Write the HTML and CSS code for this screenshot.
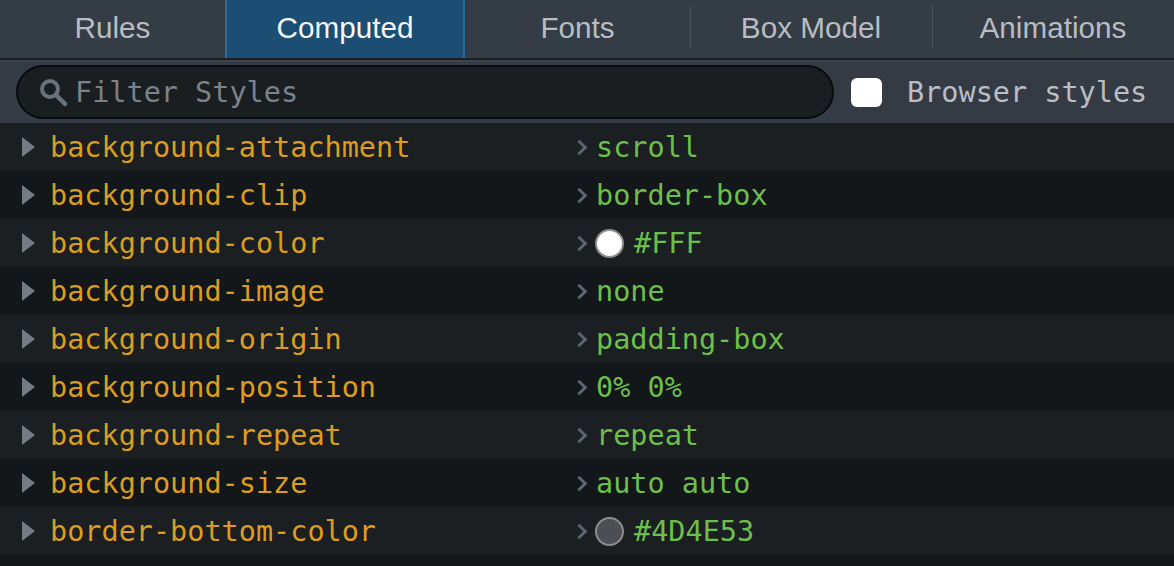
FILE: index.html
```html
<!DOCTYPE html>
<html>
<head>
<meta charset="utf-8">
<link rel="stylesheet" href="styles.css">
</head>
<body>
<div class="panel">
  <div class="tabs">
    <div class="tab t1">Rules</div>
    <div class="tab t2 active">Computed</div>
    <div class="tab t3">Fonts</div>
    <div class="tab t4 sep">Box Model</div>
    <div class="tab t5 sep">Animations</div>
  </div>
  <div class="toolbar">
    <div class="search">
      <svg class="search-icon" width="30" height="30" viewBox="0 0 30 30"><circle cx="11" cy="11" r="8" fill="none" stroke="#6c7279" stroke-width="4"/><line x1="17" y1="17" x2="26" y2="26" stroke="#6c7279" stroke-width="4.5" stroke-linecap="round"/></svg>
      <span class="placeholder">Filter Styles</span>
    </div>
    <label class="browser">
      <span class="checkbox"></span>
      <span class="browser-label">Browser styles</span>
    </label>
  </div>
  <div class="rows">
    <div class="row"><span class="twisty"></span><span class="name">background-attachment</span><span class="chev"></span><span class="value">scroll</span></div>
    <div class="row"><span class="twisty"></span><span class="name">background-clip</span><span class="chev"></span><span class="value">border-box</span></div>
    <div class="row"><span class="twisty"></span><span class="name">background-color</span><span class="chev"></span><span class="swatch white"></span><span class="value">#FFF</span></div>
    <div class="row"><span class="twisty"></span><span class="name">background-image</span><span class="chev"></span><span class="value">none</span></div>
    <div class="row"><span class="twisty"></span><span class="name">background-origin</span><span class="chev"></span><span class="value">padding-box</span></div>
    <div class="row"><span class="twisty"></span><span class="name">background-position</span><span class="chev"></span><span class="value">0% 0%</span></div>
    <div class="row"><span class="twisty"></span><span class="name">background-repeat</span><span class="chev"></span><span class="value">repeat</span></div>
    <div class="row"><span class="twisty"></span><span class="name">background-size</span><span class="chev"></span><span class="value">auto auto</span></div>
    <div class="row"><span class="twisty"></span><span class="name">border-bottom-color</span><span class="chev"></span><span class="swatch gray"></span><span class="value">#4D4E53</span></div>
  </div>
</div>
</body>
</html>
```

FILE: styles.css
```css
html, body {
  margin: 0;
  padding: 0;
  background: #14171a;
  overflow: hidden;
}
.panel {
  width: 1174px;
  height: 566px;
  overflow: hidden;
  background: #14171a;
}
.tabs {
  display: flex;
  height: 58px;
  background: #343c45;
  border-bottom: 2px solid #1b1e21;
}
.tab {
  font-family: "Liberation Sans", Arial, sans-serif;
  font-size: 29.7px;
  color: #b9bdc2;
  text-align: center;
  line-height: 55px;
  height: 58px;
  box-sizing: border-box;
  position: relative;
}
.t1 { width: 225px; }
.t2 { width: 240px; }
.t3 { width: 225px; }
.t4 { width: 242px; }
.t5 { width: 242px; }
.tab.active {
  background: #1c4e74;
  color: #f5f7fa;
  border-left: 2px solid #2f6a94;
  border-right: 2px solid #2f6a94;
}
.tab.sep::before {
  content: "";
  position: absolute;
  left: 0;
  top: 6px;
  height: 42px;
  width: 1px;
  background: #4d545d;
}
.toolbar {
  display: flex;
  align-items: center;
  height: 63px;
  box-sizing: border-box;
  padding: 4px 0 5px 16px;
  background: #343b44;
  border-top: 2px solid #3c434c;
}
.search {
  display: flex;
  align-items: center;
  width: 818px;
  height: 54px;
  box-sizing: border-box;
  border: 2px solid #080a0c;
  border-radius: 27px;
  background: #1a1e21;
  padding-left: 21px;
}
.search-icon {
  flex: none;
  margin-right: 6px;
  margin-top: 2px;
}
.placeholder, .browser-label, .name, .value {
  font-family: "DejaVu Sans Mono", Menlo, monospace;
  font-size: 28.5px;
}
.placeholder {
  color: #7b8289;
}
.browser {
  display: flex;
  align-items: center;
  margin-left: 17px;
}
.checkbox {
  width: 31px;
  height: 29px;
  border-radius: 6px;
  background: #ffffff;
  margin-right: 25px;
}
.browser-label {
  color: #b9bec4;
}
.rows {
  display: flex;
  flex-direction: column;
}
.row {
  display: flex;
  align-items: center;
  height: 48px;
  flex: none;
}
.row:nth-child(odd) { background: #1b1f22; }
.row:nth-child(even) { background: #14171a; }
.twisty {
  flex: none;
  width: 0;
  height: 0;
  margin-left: 22px;
  border-top: 10px solid transparent;
  border-bottom: 10px solid transparent;
  border-left: 13px solid #747b83;
  margin-right: 15px;
}
.name {
  color: #dc9d1f;
  width: 524px;
  flex: none;
}
.chev {
  flex: none;
  width: 8px;
  height: 8px;
  border-right: 3px solid #5c6670;
  border-top: 3px solid #5c6670;
  transform: rotate(45deg);
  margin-right: 11px;
}
.value {
  color: #6cbf4c;
}
.swatch {
  flex: none;
  width: 25px;
  height: 25px;
  border-radius: 50%;
  border: 2px solid #8c8c8c;
  margin-left: -1px;
  margin-right: 10px;
}
.swatch.white { background: #ffffff; }
.swatch.gray { background: #4d4e53; }
```
